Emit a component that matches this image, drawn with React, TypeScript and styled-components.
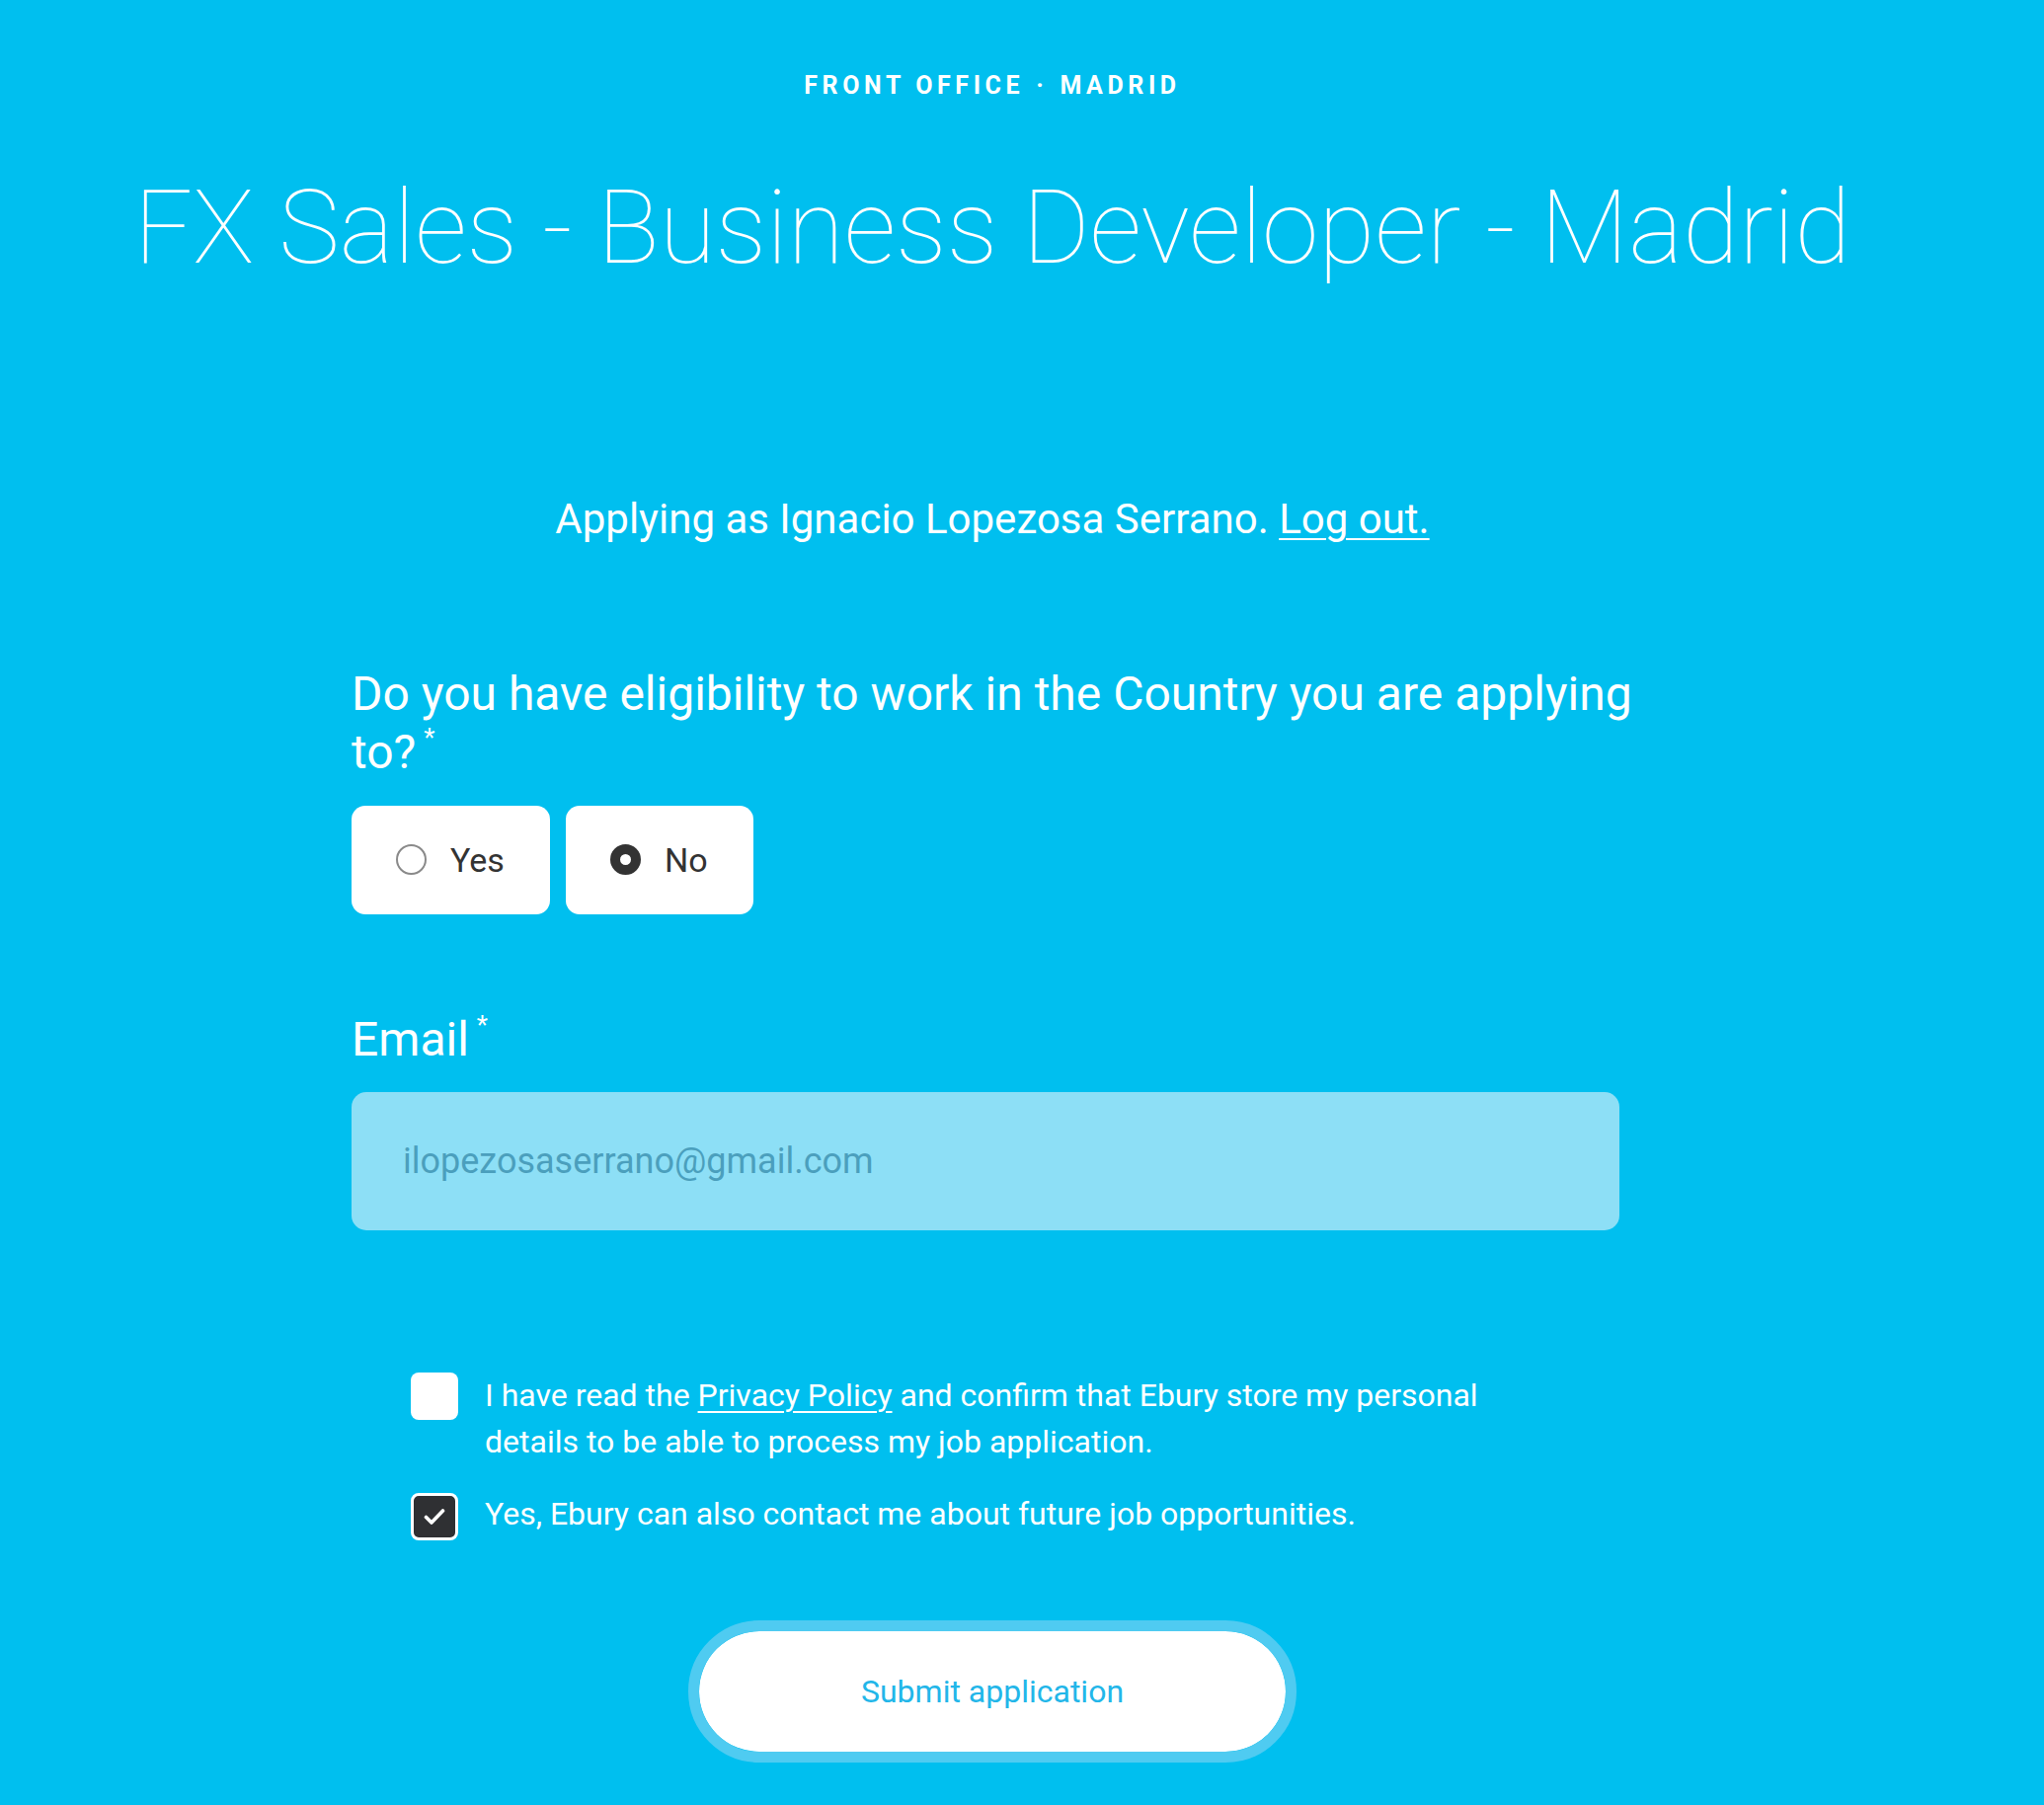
import React from "react";
import styled, { createGlobalStyle } from "styled-components";

const GlobalStyle = createGlobalStyle`
  html, body {
    margin: 0;
    padding: 0;
    background: #00bfef;
  }
  * { box-sizing: border-box; }
  body {
    font-family: Roboto, "Liberation Sans", Arial, sans-serif;
    -webkit-font-smoothing: antialiased;
  }
`;

const Page = styled.main`
  min-height: 1828px;
  background: #00bfef;
  color: #ffffff;
  padding: 72px 60px 0 0;
  display: flex;
  flex-direction: column;
  align-items: center;
`;

const Kicker = styled.div`
  font-size: 25px;
  line-height: 30px;
  font-weight: 700;
  letter-spacing: 4.6px;
  text-transform: uppercase;
  white-space: nowrap;
`;

const Dot = styled.span`
  margin: 0 12px;
`;

const Title = styled.h1`
  margin: 67px 0 0;
  font-size: 104px;
  line-height: 1.2;
  font-weight: 100;
  white-space: nowrap;
`;

const Applying = styled.p`
  margin: 200px 0 0;
  font-size: 42px;
  line-height: 63px;
  font-weight: 400;
`;

const LightLink = styled.a`
  color: #ffffff;
  text-decoration: underline;
  text-underline-offset: 5px;
  text-decoration-thickness: 2px;
  cursor: pointer;
`;

const Form = styled.form`
  margin-top: 116px;
  width: 1298px;
  display: flex;
  flex-direction: column;
  align-items: flex-start;
`;

const FieldLabel = styled.label<{ $gap: number }>`
  display: block;
  margin-top: ${(p) => p.$gap}px;
  font-size: 48px;
  line-height: 59px;
  font-weight: 400;
`;

const Required = styled.sup`
  font-size: 26px;
  line-height: 0;
  margin-left: 8px;
  vertical-align: 22px;
`;

const RadioGroup = styled.div`
  margin-top: 25px;
  display: flex;
  gap: 16px;
`;

const RadioOption = styled.label`
  height: 110px;
  padding: 0 46px 0 45px;
  background: #ffffff;
  border-radius: 14px;
  display: flex;
  align-items: center;
  gap: 24px;
  font-size: 34px;
  color: #333333;
  cursor: pointer;
`;

const RadioDot = styled.span<{ $checked: boolean }>`
  width: 31px;
  height: 31px;
  border-radius: 50%;
  background: #ffffff;
  border: ${(p) => (p.$checked ? "10px solid #333333" : "2px solid #8a8a8a")};
  flex-shrink: 0;
`;

const EmailInput = styled.div`
  margin-top: 24px;
  width: 1284px;
  height: 140px;
  border-radius: 15px;
  background: #8ddff6;
  padding-left: 52px;
  display: flex;
  align-items: center;
  font-size: 36px;
  color: #4b9fbd;
`;

const Consents = styled.div`
  margin-top: 144px;
  padding: 0 60px;
  width: 100%;
  display: flex;
  flex-direction: column;
  gap: 26px;
`;

const ConsentRow = styled.label`
  display: flex;
  align-items: flex-start;
  gap: 27px;
  font-size: 32px;
  line-height: 47px;
  color: #ffffff;
  cursor: pointer;
`;

const Box = styled.span<{ $checked: boolean }>`
  width: 48px;
  height: 48px;
  flex-shrink: 0;
  margin-top: ${(p) => (p.$checked ? "2px" : "0")};
  border-radius: 8px;
  background: ${(p) => (p.$checked ? "#2f3033" : "#ffffff")};
  border: ${(p) => (p.$checked ? "3px solid #ffffff" : "none")};
  display: flex;
  align-items: center;
  justify-content: center;
`;

const ConsentText = styled.span`
  flex: 1;
`;

const SubmitWrap = styled.div`
  margin-top: 81px;
  width: 100%;
  display: flex;
  justify-content: center;
`;

const SubmitButton = styled.button`
  width: 616px;
  height: 144px;
  border-radius: 72px;
  border: 11px solid #4fcbf1;
  background: #ffffff;
  background-clip: padding-box;
  font-family: Roboto, "Liberation Sans", Arial, sans-serif;
  font-size: 32px;
  color: #22b6e9;
  cursor: pointer;
`;

export default function App() {
  return (
    <>
      <GlobalStyle />
      <Page>
        <Kicker>
          Front Office<Dot>·</Dot>Madrid
        </Kicker>
        <Title>FX Sales - Business Developer - Madrid</Title>
        <Applying>
          Applying as Ignacio Lopezosa Serrano. <LightLink>Log out.</LightLink>
        </Applying>
        <Form onSubmit={(e) => e.preventDefault()}>
          <FieldLabel $gap={0}>
            Do you have eligibility to work in the Country you are applying to?
            <Required>*</Required>
          </FieldLabel>
          <RadioGroup>
            <RadioOption>
              <RadioDot $checked={false} />
              Yes
            </RadioOption>
            <RadioOption>
              <RadioDot $checked={true} />
              No
            </RadioOption>
          </RadioGroup>
          <FieldLabel $gap={97}>
            Email<Required>*</Required>
          </FieldLabel>
          <EmailInput>ilopezosaserrano@gmail.com</EmailInput>
          <Consents>
            <ConsentRow>
              <Box $checked={false} />
              <ConsentText>
                I have read the <LightLink>Privacy Policy</LightLink> and confirm that Ebury store my
                personal details to be able to process my job application.
              </ConsentText>
            </ConsentRow>
            <ConsentRow>
              <Box $checked={true}>
                <svg width="22" height="18" viewBox="0 0 22 18" fill="none">
                  <path
                    d="M2.5 9.5 L8 15 L19.5 3"
                    stroke="#ffffff"
                    strokeWidth="3.6"
                    strokeLinecap="round"
                    strokeLinejoin="round"
                  />
                </svg>
              </Box>
              <ConsentText>Yes, Ebury can also contact me about future job opportunities.</ConsentText>
            </ConsentRow>
          </Consents>
          <SubmitWrap>
            <SubmitButton type="submit">Submit application</SubmitButton>
          </SubmitWrap>
        </Form>
      </Page>
    </>
  );
}
